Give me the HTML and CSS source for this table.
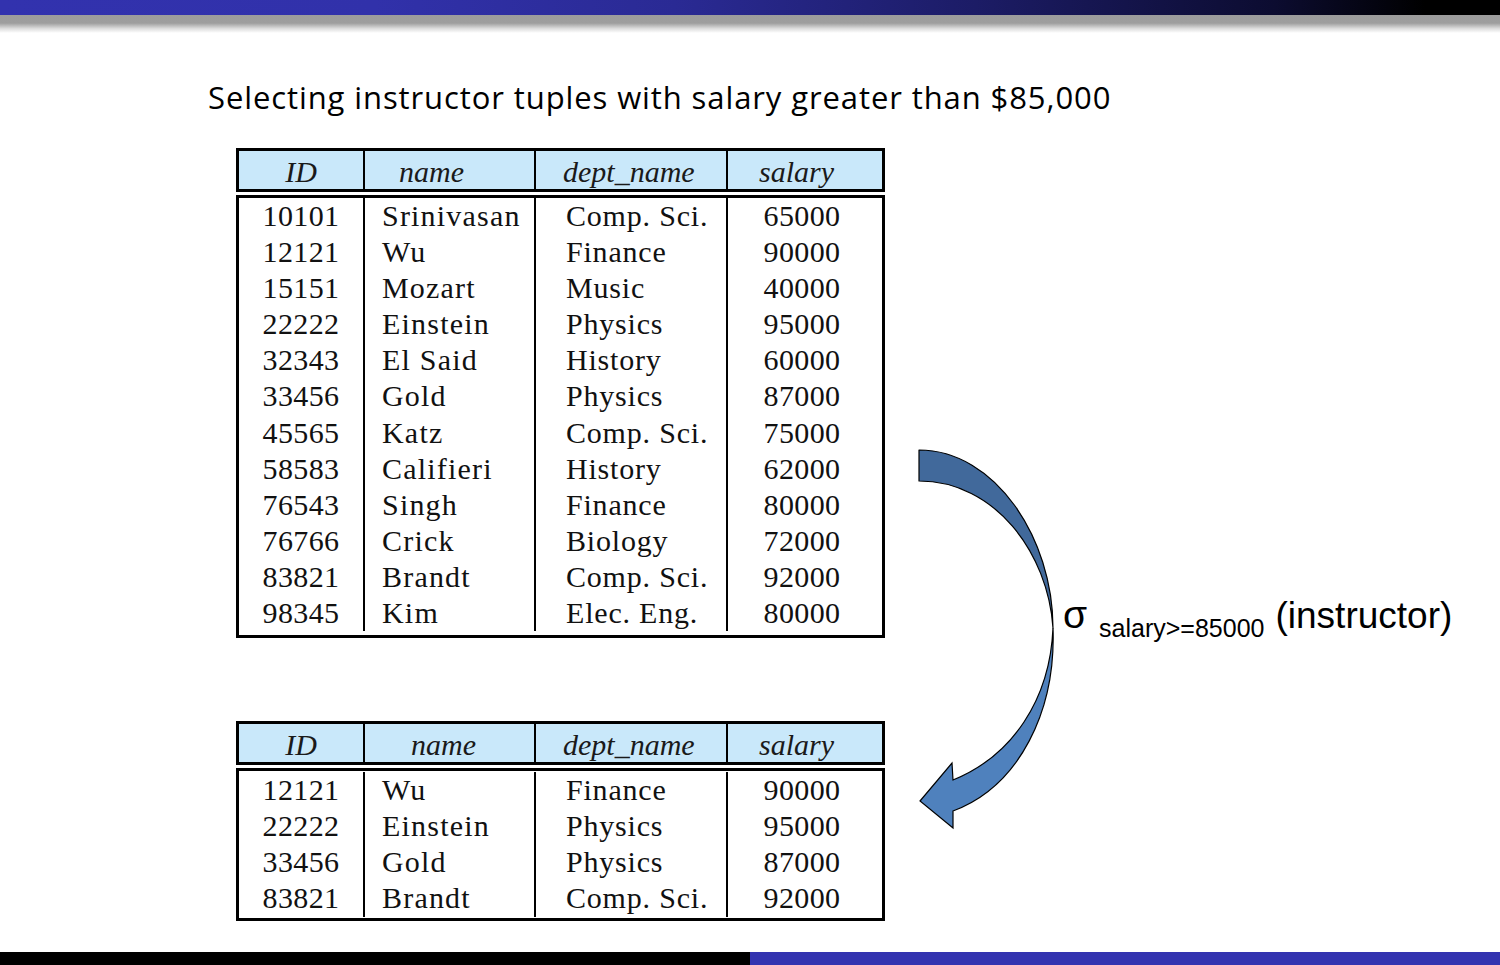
FILE: index.html
```html
<!DOCTYPE html>
<html>
<head>
<meta charset="utf-8">
<link rel="stylesheet" href="styles.css">
</head>
<body>
<div class="page">
  <div class="topbar"></div>
  <div class="topshadow"></div>
  <main class="slide">
    <h1 class="title">Selecting instructor tuples with salary greater than $85,000</h1>

    <section class="relation rel-main">
      <div class="hdr">
        <div class="hc c-id">ID</div>
        <div class="hc c-name">name</div>
        <div class="hc c-dept">dept_name</div>
        <div class="hc c-sal">salary</div>
      </div>
      <div class="body">
        <div class="col c-id"><div>10101</div><div>12121</div><div>15151</div><div>22222</div><div>32343</div><div>33456</div><div>45565</div><div>58583</div><div>76543</div><div>76766</div><div>83821</div><div>98345</div></div>
        <div class="col c-name"><div>Srinivasan</div><div>Wu</div><div>Mozart</div><div>Einstein</div><div>El Said</div><div>Gold</div><div>Katz</div><div>Califieri</div><div>Singh</div><div>Crick</div><div>Brandt</div><div>Kim</div></div>
        <div class="col c-dept"><div>Comp. Sci.</div><div>Finance</div><div>Music</div><div>Physics</div><div>History</div><div>Physics</div><div>Comp. Sci.</div><div>History</div><div>Finance</div><div>Biology</div><div>Comp. Sci.</div><div>Elec. Eng.</div></div>
        <div class="col c-sal"><div>65000</div><div>90000</div><div>40000</div><div>95000</div><div>60000</div><div>87000</div><div>75000</div><div>62000</div><div>80000</div><div>72000</div><div>92000</div><div>80000</div></div>
      </div>
    </section>

    <section class="relation rel-result">
      <div class="hdr">
        <div class="hc c-id">ID</div>
        <div class="hc c-name">name</div>
        <div class="hc c-dept">dept_name</div>
        <div class="hc c-sal">salary</div>
      </div>
      <div class="body">
        <div class="col c-id"><div>12121</div><div>22222</div><div>33456</div><div>83821</div></div>
        <div class="col c-name"><div>Wu</div><div>Einstein</div><div>Gold</div><div>Brandt</div></div>
        <div class="col c-dept"><div>Finance</div><div>Physics</div><div>Physics</div><div>Comp. Sci.</div></div>
        <div class="col c-sal"><div>90000</div><div>95000</div><div>87000</div><div>92000</div></div>
      </div>
    </section>

    <svg class="arrow" width="180" height="400" viewBox="0 0 180 400" xmlns="http://www.w3.org/2000/svg">
      <path d="M19,12 C95,12 153,100 153,190 C148,115 95,43 19,43 Z" fill="#41699b" stroke="#000" stroke-width="1.2" stroke-linejoin="round"/>
      <path d="M153,190 C156,272 120,348 53,373 L53,390 L20,363 L52,325 L53,342 C112,318 150,262 153,190 Z" fill="#4f81bd" stroke="#000" stroke-width="1.2" stroke-linejoin="miter"/>
    </svg>

    <div class="expr"><span class="sigma">σ</span><span class="sub">salary&gt;=85000</span><span class="arg">(instructor)</span></div>
  </main>
  <div class="bottombar"><div class="bb-left"></div><div class="bb-right"></div></div>
</div>
</body>
</html>
```
FILE: styles.css
```css
html, body {
  margin: 0;
  padding: 0;
  background: #fff;
}
.page {
  width: 1500px;
  height: 965px;
  display: flex;
  flex-direction: column;
  overflow: hidden;
}
.topbar {
  height: 15px;
  background: linear-gradient(to right, #3232ae 0%, #3131aa 25%, #2a2a94 45%, #1c1c66 65%, #0c0c30 85%, #000 95%, #000 100%);
}
.topshadow {
  height: 18px;
  background: linear-gradient(to bottom, #9c9c9c 0%, #9e9e9e 45%, #dcdcdc 75%, #fff 100%);
}
.slide {
  position: relative;
  flex: 1;
  padding-left: 236px;
}
.title {
  margin: 44px 0 0 -28px;
  font-family: "Open Sans", "Liberation Sans", sans-serif;
  font-weight: 400;
  font-size: 31px;
  line-height: 40px;
  color: #000;
  letter-spacing: 0.9px;
}
.relation {
  width: 649px;
  font-family: "Liberation Serif", serif;
  font-size: 30px;
  color: #111;
}
.rel-main { margin-top: 31px; }
.rel-result { margin-top: 83px; }
.hdr, .body {
  display: grid;
  grid-template-columns: 124px 171px 192px 156px;
  border: 3px solid #000;
}
.hdr {
  background: #c9e8fa;
  height: 38px;
  margin-bottom: 3px;
}
.hc {
  font-style: italic;
  line-height: 38px;
  padding-top: 2px;
  height: 36px;
  text-align: center;
  color: #1a1a1a;
}
.hc + .hc, .col + .col {
  border-left: 2px solid #000;
}
.rel-main .hdr .c-name { text-align: left; padding-left: 34px; }
.rel-result .hdr .c-name { text-align: left; padding-left: 46px; }
.hdr .c-dept { text-align: left; padding-left: 27px; }
.hdr .c-sal { text-align: left; padding-left: 31px; }
.rel-main .body { padding: 0 0 4px; }
.rel-result .body { padding: 1px 0 1px; }
.col div {
  height: 36.1px;
  line-height: 36px;
  white-space: nowrap;
}
.col.c-id { text-align: center; letter-spacing: 0.4px; }
.col.c-name { padding-left: 17px; letter-spacing: 1.2px; }
.col.c-dept { padding-left: 30px; letter-spacing: 0.8px; }
.col.c-sal { text-align: center; padding-right: 6px; letter-spacing: 0.4px; }
.arrow {
  position: absolute;
  left: 900px;
  top: 405px;
}
.expr {
  position: absolute;
  left: 1063px;
  top: 560px;
  font-family: "Liberation Sans", Arial, sans-serif;
  color: #000;
  white-space: nowrap;
}
.sigma {
  font-size: 39px;
}
.sub {
  font-size: 25px;
  margin-left: 12px;
  position: relative;
  top: 9px;
}
.arg {
  font-size: 37px;
  margin-left: 11px;
}
.bottombar {
  height: 13px;
  display: flex;
  margin-top: auto;
}
.bb-left { flex: 1; background: #000; }
.bb-right { flex: 1; background: #3333b0; }
```
